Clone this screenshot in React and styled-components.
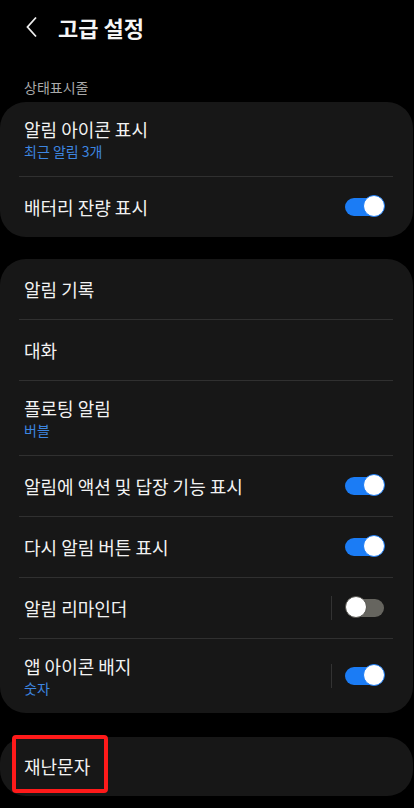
import styled, { createGlobalStyle } from "styled-components";

const GlobalStyle = createGlobalStyle`
  html, body {
    margin: 0;
    padding: 0;
    background: #000;
  }
  body {
    font-family: "Noto Sans CJK KR", "Noto Sans", sans-serif;
    color: #f2f2f2;
    -webkit-font-smoothing: antialiased;
  }
`;

const Page = styled.div`
  width: 414px;
  min-height: 808px;
  background: #000;
  overflow: hidden;
`;

const Header = styled.header`
  height: 54px;
  display: flex;
  align-items: center;
  padding-left: 25px;
  gap: 19px;
`;

const Title = styled.h1`
  margin: 0;
  font-size: 22px;
  font-weight: 700;
  color: #f5f5f5;
`;

const SectionLabel = styled.div`
  padding: 25px 24px 6px;
  font-size: 14px;
  line-height: 17px;
  color: #a9a9a9;
`;

const Card = styled.section`
  position: relative;
  background: #171717;
  border-radius: 26px;
  margin: ${(p) => p.$top || 0}px 1px 0 0;
  display: flex;
  flex-direction: column;
`;

const Row = styled.div`
  height: ${(p) => p.$h}px;
  display: flex;
  align-items: center;
  padding: 0 28px 0 24px;
`;

const Texts = styled.div`
  flex: 1;
  display: flex;
  flex-direction: column;
  gap: 1px;
`;

const RowTitle = styled.div`
  font-size: 18px;
  line-height: 23px;
  color: #f2f2f2;
`;

const RowSub = styled.div`
  font-size: 14px;
  line-height: 18px;
  color: #3d86e0;
`;

const Divider = styled.div`
  height: 1px;
  background: #303030;
  margin: 0 20px 0 19px;
`;

const VLine = styled.div`
  width: 1px;
  height: 24px;
  background: #333;
  margin-right: 13px;
`;

const Track = styled.div`
  position: relative;
  width: 40px;
  height: 24px;
  display: flex;
  align-items: center;
`;

const Rail = styled.div`
  width: 34px;
  height: 18px;
  border-radius: 9px;
  margin-left: ${(p) => (p.$on ? 0 : 5)}px;
  background: ${(p) => (p.$on ? "#1b7cf5" : "#66655f")};
`;

const Knob = styled.div`
  position: absolute;
  top: 0;
  ${(p) => (p.$on ? "right: 0;" : "left: 0;")}
  width: 20px;
  height: 20px;
  border-radius: 50%;
  background: #fff;
  border: 1.5px solid ${(p) => (p.$on ? "#1b7cf5" : "#55544f")};
  box-sizing: content-box;
`;

const Highlight = styled.div`
  position: absolute;
  left: 12px;
  top: -2px;
  width: 96px;
  height: 58px;
  border: 4px solid #ff1a1a;
  border-radius: 4px;
  box-sizing: border-box;
  pointer-events: none;
`;

const Toggle = ({ on }) => (
  <Track>
    <Rail $on={on} />
    <Knob $on={on} />
  </Track>
);

const Item = ({ title, sub, toggle, split }) => (
  <Row $h={sub ? 74 : 60}>
    <Texts>
      <RowTitle>{title}</RowTitle>
      {sub && <RowSub>{sub}</RowSub>}
    </Texts>
    {split && <VLine />}
    {toggle !== undefined && <Toggle on={toggle} />}
  </Row>
);

const BackIcon = () => (
  <svg width="14" height="22" viewBox="0 0 14 22">
    <path d="M11 1.5 L2.5 11 L11 20.5" fill="none" stroke="#eee" strokeWidth="1.8" />
  </svg>
);

const notifications = [
  { title: "알림 기록" },
  { title: "대화" },
  { title: "플로팅 알림", sub: "버블" },
  { title: "알림에 액션 및 답장 기능 표시", toggle: true },
  { title: "다시 알림 버튼 표시", toggle: true },
  { title: "알림 리마인더", toggle: false, split: true },
  { title: "앱 아이콘 배지", sub: "숫자", toggle: true, split: true },
];

export default function App() {
  return (
    <Page>
      <GlobalStyle />
      <Header>
        <BackIcon />
        <Title>고급 설정</Title>
      </Header>
      <SectionLabel>상태표시줄</SectionLabel>
      <Card>
        <Item title="알림 아이콘 표시" sub="최근 알림 3개" />
        <Divider />
        <Item title="배터리 잔량 표시" toggle={true} />
      </Card>
      <Card $top={22}>
        {notifications.map((n, i) => (
          <div key={n.title}>
            {i > 0 && <Divider />}
            <Item {...n} />
          </div>
        ))}
      </Card>
      <Card $top={24}>
        <Row $h={59}>
          <RowTitle>재난문자</RowTitle>
        </Row>
        <Highlight />
      </Card>
    </Page>
  );
}
